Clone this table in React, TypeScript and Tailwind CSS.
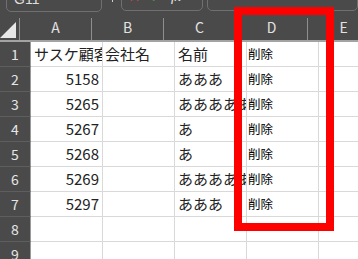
const cols = ["A", "B", "C", "D", "E"];

type Row = {
    id: number
    a?: string
    num?: boolean
    b?: string
    c?: string
    d?: string
}

const rows: Row[] = [
    { id: 1, a: "サスケ顧客ID", b: "会社名", c: "名前", d: "削除" },
    { id: 2, a: "5158", num: true, c: "あああ", d: "削除" },
    { id: 3, a: "5265", num: true, c: "あああああ", d: "削除" },
    { id: 4, a: "5267", num: true, c: "あ", d: "削除" },
    { id: 5, a: "5268", num: true, c: "あ", d: "削除" },
    { id: 6, a: "5269", num: true, c: "あああああ", d: "削除" },
    { id: 7, a: "5297", num: true, c: "あああ", d: "削除" },
    { id: 8 },
    { id: 9 },
]

export default function App() {
    return (
        <div className="relative w-[358px] h-[259px] overflow-hidden bg-[#4a4a4a] font-['Noto_Sans_CJK_JP','Liberation_Sans',sans-serif]">
            {/* formula bar, mostly scrolled off */}
            <div className="h-[13px] overflow-hidden">
                <div className="flex items-start -mt-[13px] text-[#dedede]">
                    <div className="ml-[6px] w-[101px] h-[25px] rounded-[5px] border border-[#707070] pl-[7px] pt-[3px] text-[14px] leading-[16px] font-['Liberation_Sans',sans-serif]">
                        G11
                    </div>
                    <div className="ml-[10px] mt-[12px] w-[2px] h-[3px] bg-[#cfcfcf]" />
                    <div className="ml-[8px] w-[87px] h-[24px] rounded-[5px] border border-[#707070] flex items-start pt-[1px] text-[14px] leading-[16px] font-['DejaVu_Sans',sans-serif]">
                        <span className="ml-[6px] text-[#e0463c]">✕</span>
                        <span className="ml-[10px] text-[#3fae4b]">✓</span>
                        <span className="ml-[9px] italic text-[#e6e6e6] font-['Liberation_Serif',serif]">fx</span>
                    </div>
                    <div className="ml-[4px] w-[160px] h-[24px] rounded-[5px] border border-[#707070]" />
                </div>
            </div>

            {/* column header */}
            <div className="flex h-[29px] border-b-2 border-[#a3a3a3] text-[#e2e2e2] text-[14px]">
                <div className="w-[31px] flex">
                    <div className="flex-1 flex items-end justify-end pb-[1px] pr-[2px]">
                        <svg width="17" height="17" viewBox="0 0 17 17">
                            <polygon points="0,16 16,16 16,0" fill="#e6e6e6" />
                        </svg>
                    </div>
                    <div className="w-px h-[22px] self-end bg-[#8e8e8e]" />
                </div>
                {cols.map((c) => (
                    <div key={c} className="w-[72px] shrink-0 flex">
                        <div className="flex-1 flex items-center justify-center pt-[1px]">{c}</div>
                        <div className="w-px h-[22px] self-end bg-[#8e8e8e]" />
                    </div>
                ))}
            </div>

            {/* rows */}
            {rows.map((r) => (
                <div key={r.id} className="flex h-[25px]">
                    <div className="w-[31px] shrink-0 flex items-center justify-center border-r border-b border-r-[#9a9a9a] border-b-[#5e5e5e] text-[14px] text-[#e6e6e6]">
                        {r.id}
                    </div>
                    <div className={`w-[72px] shrink-0 bg-white border-r border-b border-[#d9d9d9] flex items-center overflow-hidden whitespace-nowrap text-[15px] text-[#222] ${r.num ? "justify-end pr-[3px]" : "pl-[3px]"}`}>
                        {r.a}
                    </div>
                    <div className="w-[72px] shrink-0 bg-white border-r border-b border-[#d9d9d9] flex items-center overflow-hidden whitespace-nowrap pl-[2px] text-[15px] text-[#222]">
                        {r.b}
                    </div>
                    <div className="w-[72px] shrink-0 bg-white border-r border-b border-[#d9d9d9] flex items-center overflow-hidden whitespace-nowrap pl-[3px] text-[15px] text-[#222]">
                        {r.c}
                    </div>
                    <div className="w-[72px] shrink-0 bg-white border-r border-b border-[#d9d9d9] flex items-center overflow-hidden whitespace-nowrap pl-px text-[12.5px] text-black">
                        {r.d}
                    </div>
                    <div className="w-[72px] shrink-0 bg-white border-r border-b border-[#d9d9d9]" />
                </div>
            ))}

            {/* red highlight box */}
            <div className="absolute left-[234px] top-[7px] w-[100px] h-[224px] border-[8px] border-[#ff0000]" />
        </div>
    )
}
